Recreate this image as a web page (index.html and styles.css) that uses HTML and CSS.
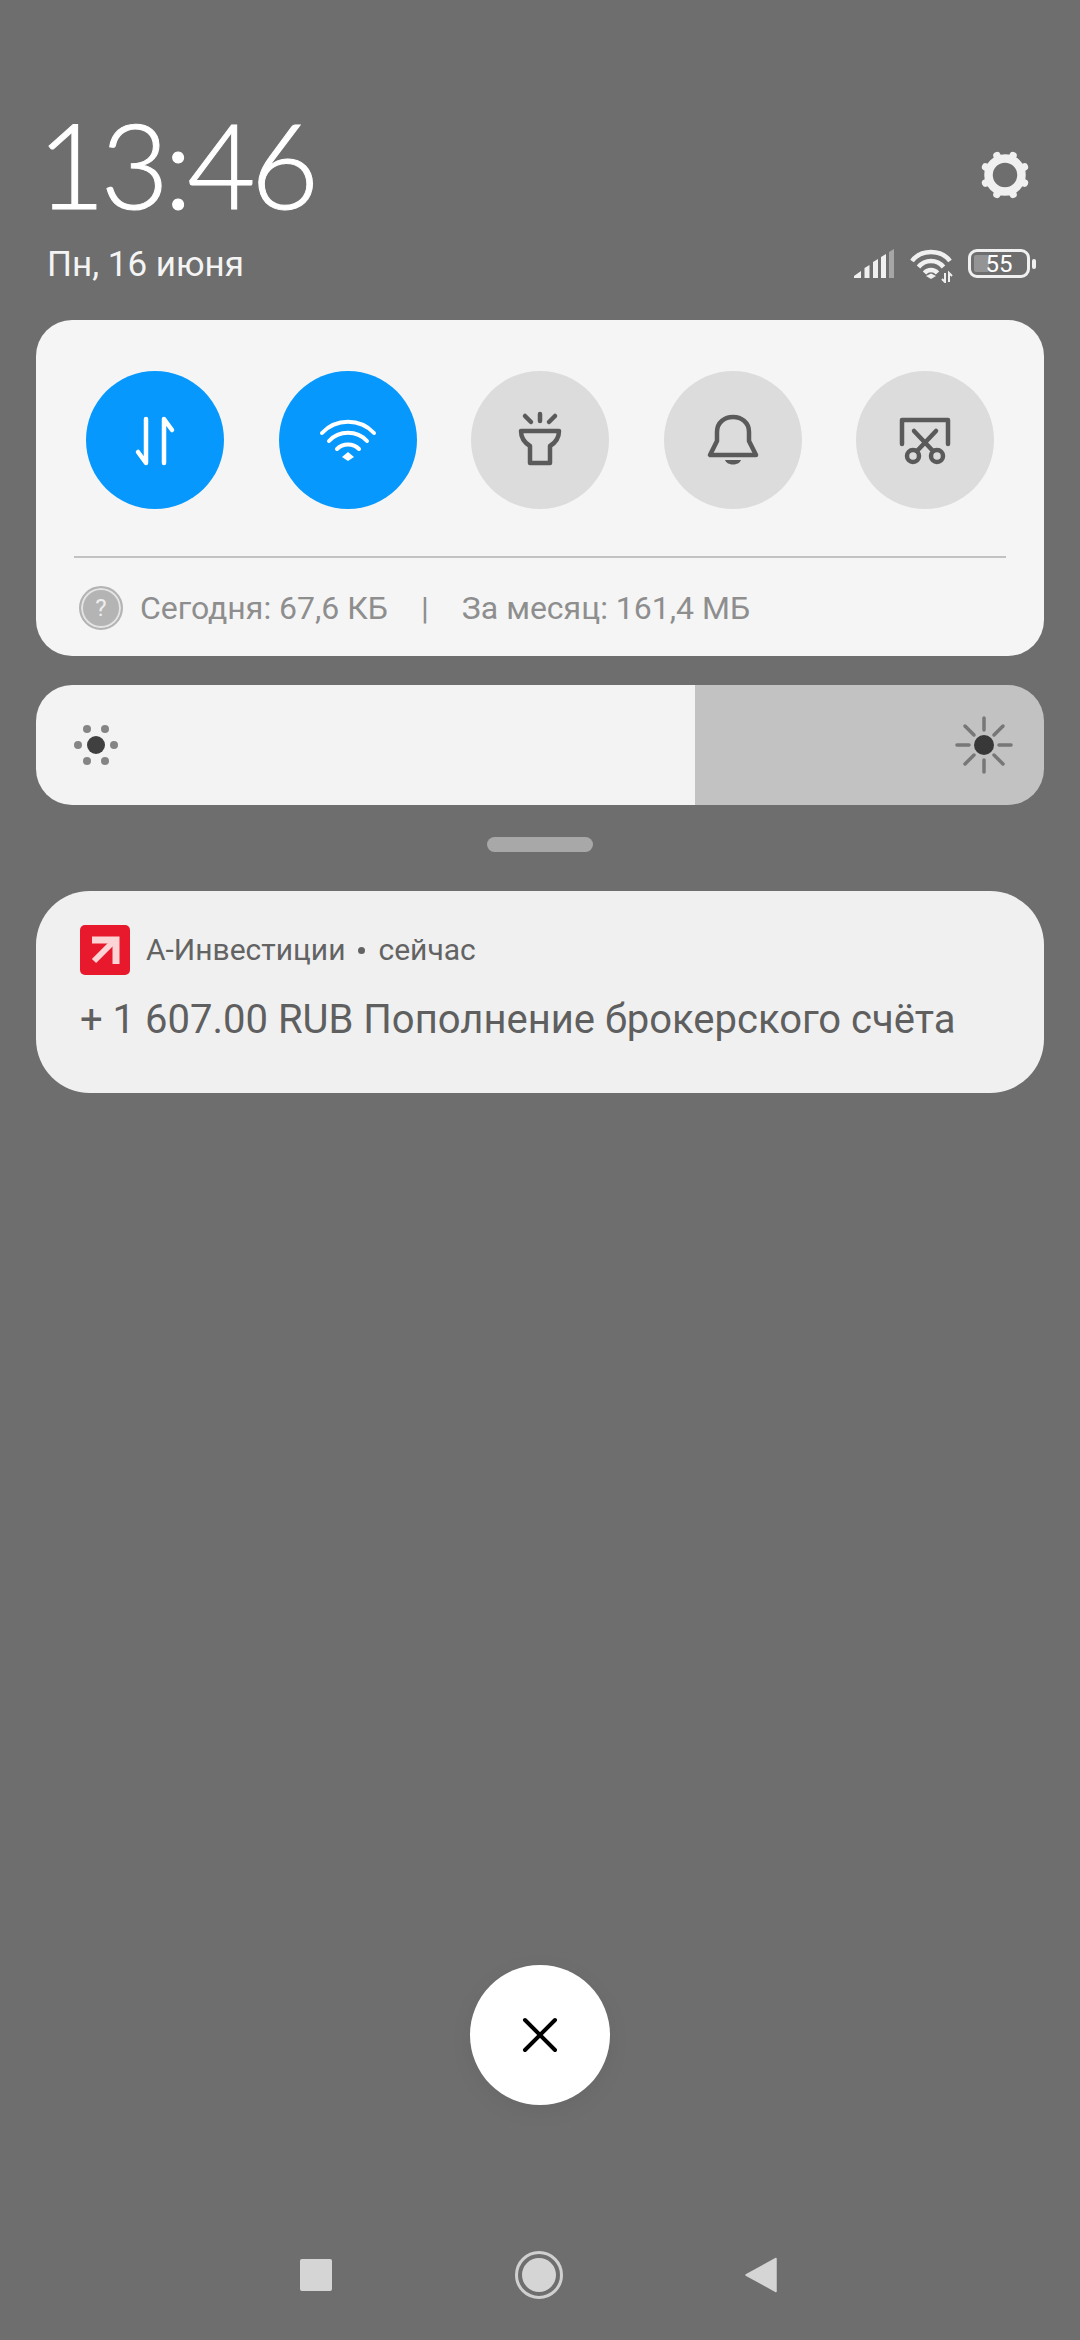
FILE: index.html
```html
<!DOCTYPE html>
<html lang="ru">

<head>
    <meta charset="UTF-8">
    <meta name="viewport" content="width=device-width, initial-scale=1.0">
    <title>Шторка уведомлений</title>
    <link rel="stylesheet" href="styles.css">
</head>

<body>
    <div class="screen">
        <header class="header">
            <div class="clockBox">
                <div class="clock">13:46</div>
                <div class="date">Пн, 16 июня</div>
            </div>
            <div class="headerRight">
                <svg class="gear" viewBox="-26 -26 52 52">
                    <circle r="16.500" fill="none" stroke="#f0f0f0" stroke-width="8.500"/>
                    <g stroke="#f0f0f0" stroke-width="7.500" stroke-linecap="round">
                        <path d="M0 -19V-21" transform="rotate(22.500)"/>
                        <path d="M0 -19V-21" transform="rotate(67.500)"/>
                        <path d="M0 -19V-21" transform="rotate(112.500)"/>
                        <path d="M0 -19V-21" transform="rotate(157.500)"/>
                        <path d="M0 -19V-21" transform="rotate(202.500)"/>
                        <path d="M0 -19V-21" transform="rotate(247.500)"/>
                        <path d="M0 -19V-21" transform="rotate(292.500)"/>
                        <path d="M0 -19V-21" transform="rotate(337.500)"/>
                    </g>
                </svg>
                <div class="status">
                    <svg class="signal" viewBox="0 0 41 29">
                        <path d="M0 29V27L7 22V29Z" fill="#f0f0f0"/>
                        <path d="M10.500 29V19L15.500 16V29Z" fill="#f0f0f0"/>
                        <path d="M19 29V13L24 10V29Z" fill="#f0f0f0"/>
                        <path d="M27 29V8L32 5V29Z" fill="#f0f0f0"/>
                        <path d="M35 29V3L40 0V29Z" fill="#a6a6a6"/>
                    </svg>
                    <svg class="wifiSmall" viewBox="0 0 44 34">
                        <g fill="none" stroke="#f0f0f0" stroke-width="4.500">
                            <path d="M2 12C11 0 31 0 40 12"/>
                            <path d="M8.500 18C15 10 27 10 33.500 18"/>
                            <path d="M14.500 24C18 20 24 20 27.500 24"/>
                        </g>
                        <path d="M21 24.500L26 27L21 30L16 27Z" fill="#f0f0f0"/>
                        <g fill="none" stroke="#f0f0f0" stroke-width="2">
                            <path d="M35 24V33L32 30"/>
                            <path d="M39 33V24L42 27"/>
                        </g>
                    </svg>
                    <div class="battery">
                        <div class="batteryBody">
                            <div class="batteryFill"></div>
                            <span class="batteryText">55</span>
                        </div>
                        <div class="batteryNub"></div>
                    </div>
                </div>
            </div>
        </header>

        <section class="panel">
            <div class="toggles">
                <div class="toggle on">
                    <svg viewBox="0 0 138 138" fill="none" stroke="#fff" stroke-width="4.500" stroke-linecap="round" stroke-linejoin="round">
                        <path d="M60 48V92L52 81" />
                        <path d="M78 92V48L86 59" />
                    </svg>
                </div>
                <div class="toggle on">
                    <svg viewBox="0 0 138 138" fill="none" stroke="#fff" stroke-width="4" stroke-linecap="round">
                        <path d="M43 62C57 47 81 47 95 62"/>
                        <path d="M50 70C60 59 78 59 88 70"/>
                        <path d="M58 78C64 72 74 72 80 78"/>
                        <path d="M69 81L75 86L69 90L63 86Z" fill="#fff" stroke="none"/>
                    </svg>
                </div>
                <div class="toggle">
                    <svg viewBox="0 0 138 138" fill="none" stroke="#5a5a5a" stroke-width="4.500" stroke-linecap="round" stroke-linejoin="round">
                        <path d="M69 43V50"/>
                        <path d="M54 45L60 51"/>
                        <path d="M84 45L78 51"/>
                        <path d="M50 60H88C88 68 84 72 79 75V92H59V75C54 72 50 68 50 60Z"/>
                    </svg>
                </div>
                <div class="toggle">
                    <svg viewBox="0 0 138 138" fill="none" stroke="#5a5a5a" stroke-width="4.500" stroke-linecap="round" stroke-linejoin="round">
                        <path d="M46 84H92L85 70V61C85 41 53 41 53 61V70Z"/>
                        <path d="M61 89H77C75 95 63 95 61 89Z" fill="#5a5a5a" stroke="none"/>
                    </svg>
                </div>
                <div class="toggle">
                    <svg viewBox="0 0 138 138" fill="none" stroke="#5a5a5a" stroke-width="4.500" stroke-linecap="round" stroke-linejoin="round">
                        <path d="M46 73V49H92V73"/>
                        <path d="M58 60L77 80"/>
                        <path d="M80 60L61 80"/>
                        <circle cx="57" cy="85" r="6"/>
                        <circle cx="81" cy="85" r="6"/>
                    </svg>
                </div>
            </div>
            <hr class="divider">
            <div class="usage">
                <span class="helpIcon">?</span>
                <span>Сегодня: 67,6 КБ</span>
                <span class="usageSep">|</span>
                <span>За месяц: 161,4 МБ</span>
            </div>
        </section>

        <section class="brightness">
            <div class="brightnessFill">
                <svg class="sunSmall" viewBox="0 0 44 44">
                    <circle cx="22" cy="22" r="9" fill="#404040"/>
                    <g fill="#858585">
                        <circle cx="4" cy="22" r="4"/>
                        <circle cx="40" cy="22" r="4"/>
                        <circle cx="13" cy="6" r="4"/>
                        <circle cx="31" cy="6" r="4"/>
                        <circle cx="13" cy="38" r="4"/>
                        <circle cx="31" cy="38" r="4"/>
                    </g>
                </svg>
            </div>
            <div class="brightnessRest">
                <svg class="sunBig" viewBox="0 0 58 58">
                    <g stroke="#777" stroke-width="3.500" stroke-linecap="round">
                        <path d="M29 2V14"/>
                        <path d="M29 44V56"/>
                        <path d="M2 29H14"/>
                        <path d="M44 29H56"/>
                        <path d="M10 10L19 19"/>
                        <path d="M39 39L48 48"/>
                        <path d="M48 10L39 19"/>
                        <path d="M19 39L10 48"/>
                    </g>
                    <circle cx="29" cy="29" r="10" fill="#383838"/>
                </svg>
            </div>
        </section>

        <div class="handle"></div>

        <section class="notification">
            <div class="notifHead">
                <svg class="appIcon" viewBox="0 0 50 50">
                    <rect width="50" height="50" rx="5" fill="#e8192c"/>
                    <path d="M14 36L34 16" stroke="#fbd5d5" stroke-width="6" fill="none"/>
                    <path d="M12 15H36V39" stroke="#fbd5d5" stroke-width="7" fill="none"/>
                </svg>
                <span class="appName">А-Инвестиции</span>
                <span class="dot"></span>
                <span class="appName">сейчас</span>
            </div>
            <div class="notifText">+ 1 607.00 RUB Пополнение брокерского счёта</div>
        </section>

        <div class="closeBtn">
            <svg viewBox="0 0 36 36" fill="none" stroke="#000" stroke-width="4" stroke-linecap="round">
                <path d="M3 3L33 33"/>
                <path d="M33 3L3 33"/>
            </svg>
        </div>

        <nav class="navBar">
            <div class="navSquare"></div>
            <div class="navHome"><div class="navHomeInner"></div></div>
            <svg class="navBack" viewBox="0 0 32 36">
                <path d="M31 1.500V34.500L1 18Z" fill="#d5d5d5" stroke="#d5d5d5" stroke-width="1.500" stroke-linejoin="round"/>
            </svg>
        </nav>
    </div>
</body>

</html>
```

FILE: styles.css
```css
* {
    box-sizing: border-box;
}

body {
    margin: 0;
    background-color: #6e6e6e;
    font-family: Roboto, "Noto Sans", sans-serif;
}

.screen {
    width: 1080px;
    height: 2340px;
    padding: 0 36px;
    display: flex;
    flex-direction: column;
    overflow: hidden;
}

.header {
    height: 320px;
    display: flex;
    justify-content: space-between;
    padding: 104px 0 0 11px;
}

.clock {
    margin-left: -10px;
    font-family: Lato, sans-serif;
    font-weight: 300;
    font-size: 118px;
    line-height: 120px;
    color: #fff;
    letter-spacing: -5px;
    -webkit-text-stroke: 1px #fff;
}

.date {
    margin-top: 21px;
    font-size: 35px;
    line-height: 40px;
    color: #f4f4f4;
}

.headerRight {
    display: flex;
    flex-direction: column;
    align-items: flex-end;
}

.gear {
    width: 52px;
    height: 52px;
    margin: 45px 13px 0 0;
}

.status {
    margin-top: 48px;
    margin-right: 8px;
    display: flex;
    align-items: flex-start;
}

.signal {
    width: 41px;
    height: 29px;
}

.wifiSmall {
    width: 44px;
    height: 34px;
    margin-left: 15px;
}

.battery {
    display: flex;
    align-items: center;
    margin-left: 14px;
}

.batteryBody {
    position: relative;
    width: 62px;
    height: 29px;
    border: 3.500px solid #f0f0f0;
    border-radius: 9px;
    display: flex;
    align-items: center;
    justify-content: center;
}

.batteryFill {
    position: absolute;
    left: 3px;
    top: 3px;
    bottom: 3px;
    width: 15px;
    background-color: #949494;
    border-radius: 2px;
}

.batteryText {
    position: relative;
    font-size: 24px;
    line-height: 22px;
    color: #fff;
}

.batteryNub {
    width: 4px;
    height: 10px;
    margin-left: 2px;
    background-color: #f0f0f0;
    border-radius: 2px;
}

.panel {
    height: 336px;
    background-color: #f5f5f5;
    border-radius: 36px;
    padding: 51px 38px 0;
}

.toggles {
    display: flex;
    justify-content: space-between;
    padding: 0 12px;
}

.toggle {
    width: 138px;
    height: 138px;
    border-radius: 50%;
    background-color: #dcdcdc;
}

.toggle svg {
    display: block;
    width: 138px;
    height: 138px;
}

.toggle.on {
    background-color: #0698fc;
}

.divider {
    margin: 47px 0 0;
    border: 0;
    height: 2px;
    background-color: #c2c2c2;
}

.usage {
    display: flex;
    align-items: center;
    margin-top: 28px;
    padding-left: 5px;
    font-size: 32px;
    line-height: 44px;
    color: #8e8e8e;
}

.helpIcon {
    width: 44px;
    height: 44px;
    margin-right: 17px;
    border-radius: 50%;
    background-color: #b4b4b4;
    border: 2px solid #b4b4b4;
    box-shadow: inset 0 0 0 2px #e4e4e4;
    color: #eee;
    font-size: 24px;
    line-height: 40px;
    text-align: center;
}

.usageSep {
    margin: 0 33px;
}

.brightness {
    margin-top: 29px;
    height: 120px;
    border-radius: 36px;
    overflow: hidden;
    display: flex;
}

.brightnessFill {
    width: 659px;
    background-color: #f3f3f3;
    display: flex;
    align-items: center;
    padding-left: 38px;
}

.brightnessRest {
    flex: 1;
    background-color: #c2c2c2;
    display: flex;
    align-items: center;
    justify-content: flex-end;
    padding-right: 31px;
}

.sunSmall {
    width: 44px;
    height: 44px;
}

.sunBig {
    width: 58px;
    height: 58px;
}

.handle {
    width: 106px;
    height: 15px;
    margin: 32px auto 0;
    background-color: #a8a8a8;
    border-radius: 8px;
}

.notification {
    margin-top: 39px;
    height: 202px;
    padding: 34px 44px 0;
    background-color: #f0f0f0;
    border-radius: 54px;
}

.notifHead {
    display: flex;
    align-items: center;
}

.appIcon {
    width: 50px;
    height: 50px;
    margin-right: 16px;
}

.appName {
    font-size: 30px;
    line-height: 50px;
    color: #636363;
}

.dot {
    width: 7px;
    height: 7px;
    margin: 0 13px 0 13px;
    border-radius: 50%;
    background-color: #636363;
}

.notifText {
    margin-top: 22px;
    font-size: 40px;
    line-height: 46px;
    color: #5f5f5f;
}

.closeBtn {
    width: 140px;
    height: 140px;
    margin: auto auto 0;
    border-radius: 50%;
    background-color: #fff;
    box-shadow: 0 6px 24px rgba(0, 0, 0, 0.05);
    display: flex;
    align-items: center;
    justify-content: center;
}

.closeBtn svg {
    width: 36px;
    height: 36px;
}

.navBar {
    height: 235px;
    padding: 105px 267px 0 264px;
    display: flex;
    align-items: center;
    justify-content: space-between;
}

.navSquare {
    width: 32px;
    height: 32px;
    background-color: #d5d5d5;
    border-radius: 2px;
}

.navHome {
    width: 48px;
    height: 48px;
    border: 3px solid #d0d0d0;
    border-radius: 50%;
    display: flex;
    align-items: center;
    justify-content: center;
}

.navHomeInner {
    width: 34px;
    height: 34px;
    border-radius: 50%;
    background-color: #d5d5d5;
}

.navBack {
    width: 32px;
    height: 36px;
}
```
